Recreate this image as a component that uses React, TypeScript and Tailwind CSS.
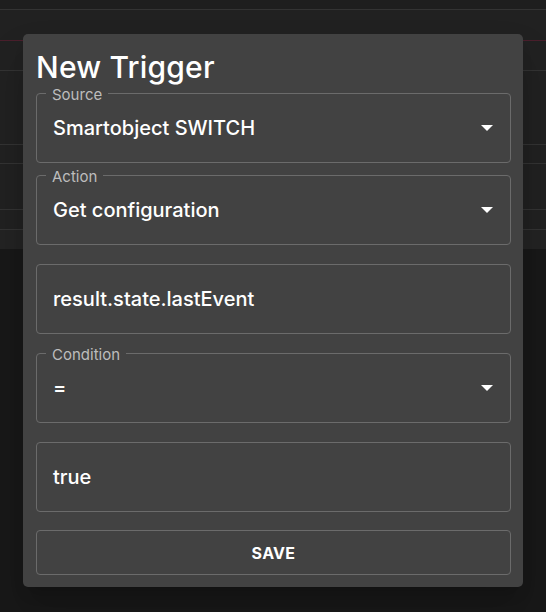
import React from "react";

const font = { fontFamily: "Inter, 'Noto Sans', sans-serif" };

const Arrow = () => (
  <svg width="12" height="6" viewBox="0 0 12 6" className="shrink-0">
    <path d="M0 0h12L6 6z" fill="#ffffff" />
  </svg>
);

type FieldProps = { label?: string; value: string; select?: boolean; className?: string };

const Field = ({ label, value, select, className = "" }: FieldProps) => (
  <div
    className={`relative flex h-[70px] items-center rounded-[4px] border border-[#6b6b6b] pl-[16px] pr-[17px] ${className}`}
  >
    {label && (
      <span className="absolute left-[9px] top-0 -translate-y-1/2 bg-[#424242] px-[6px] text-[15px] leading-none text-[#bdbdbd]">
        {label}
      </span>
    )}
    <span className="flex-1 text-[20px] font-medium text-white">{value}</span>
    {select && <Arrow />}
  </div>
);

export default function App() {
  return (
    <div className="relative h-[612px] w-[546px] overflow-hidden bg-[#181818]" style={font}>
      {/* page behind the dialog */}
      <div className="flex flex-col bg-[#212121]">
        <div className="h-[10px] border-b border-[#333333] bg-[#1e1e1e]" />
        <div className="h-[31px] border-b border-[#4a1f2c]" />
        <div className="h-[30px] border-b border-[#333333]" />
        <div className="h-[74px] border-b border-[#333333]" />
        <div className="h-[19px] border-b border-[#333333]" />
        <div className="h-[46px] border-b border-[#333333]" />
        <div className="h-[20px] border-b border-[#333333]" />
        <div className="h-[19px] bg-[#232323]" />
      </div>

      {/* dialog */}
      <div className="absolute left-[23px] top-[34px] flex w-[500px] flex-col rounded-[5px] bg-[#424242] pb-[12px] pl-[13px] pr-[12px] pt-[15px] shadow-[0_11px_15px_-7px_rgba(0,0,0,0.2),0_24px_38px_3px_rgba(0,0,0,0.14)]">
        <h2 className="text-[30px] font-medium leading-[36px] tracking-[0.2px] text-white">New Trigger</h2>
        <Field className="mt-[8px]" label="Source" value="Smartobject SWITCH" select />
        <Field className="mt-[12px]" label="Action" value="Get configuration" select />
        <Field className="mt-[19px]" value="result.state.lastEvent" />
        <Field className="mt-[19px]" label="Condition" value="=" select />
        <Field className="mt-[19px]" value="true" />
        <button className="mt-[18px] h-[45px] rounded-[4px] border border-[#6b6b6b] text-[16px] font-bold tracking-[0.3px] text-white">
          SAVE
        </button>
      </div>
    </div>
  );
}
